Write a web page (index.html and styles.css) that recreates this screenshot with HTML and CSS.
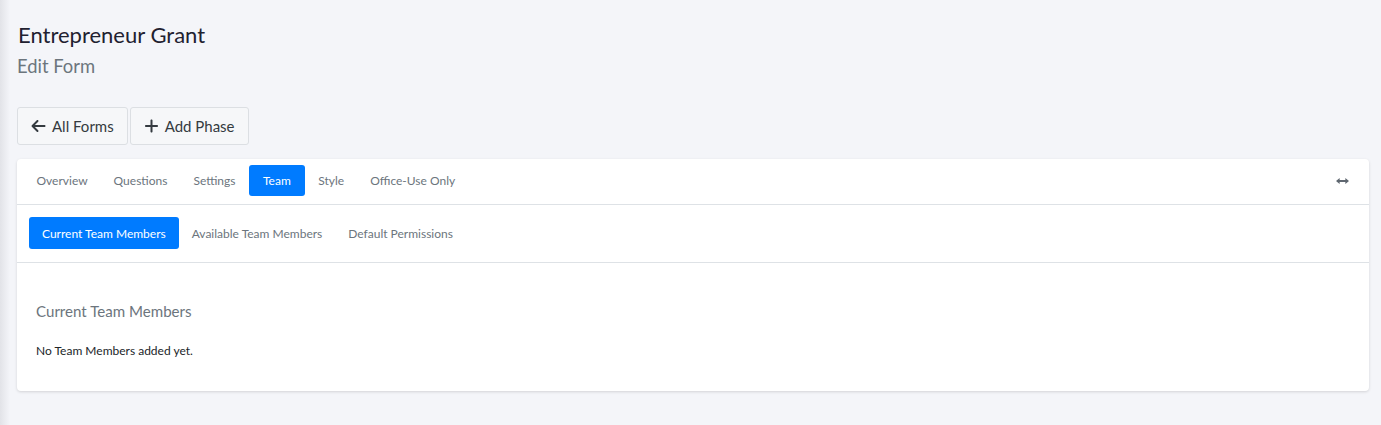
FILE: index.html
```html
<!DOCTYPE html>
<html>
<head>
<meta charset="utf-8">
<link rel="stylesheet" href="styles.css">
</head>
<body>
<div class="page">
  <header class="page-head">
    <h1 class="title">Entrepreneur Grant</h1>
    <h2 class="subtitle">Edit Form</h2>
  </header>
  <div class="actions">
    <button class="btn"><svg class="ico" viewBox="0 0 448 512" width="15" height="16"><path fill="#343a40" d="M9.4 233.4c-12.5 12.5-12.5 32.8 0 45.3l160 160c12.5 12.5 32.8 12.5 45.3 0s12.5-32.8 0-45.3L109.2 288H416c17.7 0 32-14.3 32-32s-14.3-32-32-32H109.3L214.6 118.6c12.5-12.5 12.5-32.8 0-45.3s-32.8-12.5-45.3 0l-160 160z"/></svg>All Forms</button>
    <button class="btn"><svg class="ico" viewBox="0 0 448 512" width="15" height="16"><path fill="#343a40" d="M256 80c0-17.7-14.3-32-32-32s-32 14.3-32 32V224H48c-17.7 0-32 14.3-32 32s14.3 32 32 32H192V432c0 17.7 14.3 32 32 32s32-14.3 32-32V288H400c17.7 0 32-14.3 32-32s-14.3-32-32-32H256V80z"/></svg>Add Phase</button>
  </div>
  <section class="card">
    <nav class="tabs">
      <a class="tab">Overview</a>
      <a class="tab">Questions</a>
      <a class="tab">Settings</a>
      <a class="tab active">Team</a>
      <a class="tab">Style</a>
      <a class="tab">Office-Use Only</a>
      <span class="spacer"></span>
      <svg class="expand" viewBox="0 0 16 8" width="13" height="8"><path d="M2 4h12" stroke="#5f6770" stroke-width="2.2"/><path d="M0 4l4.5-3.8v7.6z M16 4l-4.5-3.8v7.6z" fill="#5f6770"/></svg>
    </nav>
    <nav class="subtabs">
      <a class="subtab active">Current Team Members</a>
      <a class="subtab">Available Team Members</a>
      <a class="subtab">Default Permissions</a>
    </nav>
    <div class="body">
      <h3 class="section-title">Current Team Members</h3>
      <p class="empty">No Team Members added yet.</p>
    </div>
  </section>
</div>
</body>
</html>
```
FILE: styles.css
```css
* { box-sizing: border-box; }
html, body { margin: 0; height: 100%; }
body {
  background: #f4f5f9;
  font-family: "Source Sans Pro", Lato, "Noto Sans", sans-serif;
  color: #212529;
  position: relative;
  overflow: hidden;
}
body::before {
  content: "";
  position: absolute;
  left: 0; top: 0; bottom: 0;
  width: 10px;
  background: linear-gradient(to right, #e2e3e8, #f4f5f9);
}
.page { padding: 0 12px 0 17px; }
.page-head { padding-top: 21px; }
.title {
  margin: 0;
  font-size: 22px;
  font-weight: 400;
  color: #1f2130;
  line-height: 28px;
  padding-left: 1px;
}
.subtitle {
  margin: 5px 0 0;
  font-size: 18.4px;
  font-weight: 400;
  color: #6c757d;
  line-height: 24px;
}
.actions {
  display: flex;
  gap: 2px;
  margin-top: 29px;
}
.btn {
  display: flex;
  align-items: center;
  gap: 6px;
  height: 38px;
  padding: 0 13px;
  background: #f6f7f9;
  border: 1px solid #dcdfe3;
  border-radius: 3px;
  font-family: inherit;
  font-size: 15px;
  color: #343a40;
}
.ico { display: block; }
.card {
  margin-top: 14px;
  background: #fff;
  border-radius: 4px;
  box-shadow: 0 1px 3px rgba(0,0,0,0.14);
  overflow: hidden;
}
.tabs {
  display: flex;
  align-items: center;
  padding: 6px 20px 8px 7px;
  border-bottom: 1px solid #dee2e6;
}
.tab, .subtab {
  display: flex;
  align-items: center;
  color: #6c757d;
  border-radius: 3px;
}
.tab { height: 31px; padding: 0 12.5px; margin-right: 1px; font-size: 12px; }
.tab.active { padding: 0 14px; }
.subtab { height: 32px; padding: 0 13px; font-size: 12px; }
.tab.active, .subtab.active { background: #007bff; color: #fff; }
.spacer { flex: 1; }
.expand { display: block; }
.subtabs {
  display: flex;
  padding: 12px 12px 13px;
  border-bottom: 1px solid #dee2e6;
}
.body { padding: 38px 19px 31px; }
.section-title {
  margin: 0;
  font-size: 15.1px;
  font-weight: 400;
  color: #6c757d;
  line-height: 20px;
}
.empty {
  margin: 21px 0 0;
  font-size: 12px;
  color: #212529;
  line-height: 18px;
}
```
